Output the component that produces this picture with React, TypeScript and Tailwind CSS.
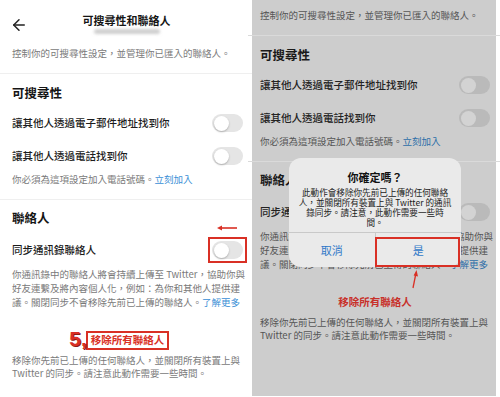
import React from 'react';
import { ArrowLeft } from 'lucide-react';

const FONT = { fontFamily: '"Noto Sans CJK TC", "Noto Sans", sans-serif' };

interface Palette {
  heading: string;
  item: string;
  muted: string;
  link: string;
  divider: string;
  track: string;
  knob: string;
  danger: string;
}

const light: Palette = {
  heading: 'text-[#151515]',
  item: 'text-[#1c1c1c]',
  muted: 'text-[#7a7a7a]',
  link: 'text-[#3a8fd6]',
  divider: 'bg-[#efefef]',
  track: 'bg-[#e5e5e5]',
  knob: 'bg-white shadow-[0_1px_2px_rgba(0,0,0,0.25)]',
  danger: 'text-[#d93025]',
};

const dim: Palette = {
  heading: 'text-[#1a1a1a]',
  item: 'text-[#222222]',
  muted: 'text-[#555555]',
  link: 'text-[#2c6ea8]',
  divider: 'bg-[#dadada]',
  track: 'bg-[#bababa]',
  knob: 'bg-[#d3d3d3]',
  danger: 'text-[#c8302a]',
};

function Toggle({ p }: { p: Palette }) {
  return (
    <div className={`w-[31px] h-[18px] rounded-full p-[1.5px] flex items-center ${p.track}`}>
      <div className={`w-[15px] h-[15px] rounded-full ${p.knob}`} />
    </div>
  );
}

function Divider({ p, top, bottom }: { p: Palette; top: string; bottom: string }) {
  return <div className={`h-px -mx-3 ${p.divider} ${top} ${bottom}`} />;
}

function Body({ p, annotate }: { p: Palette; annotate: boolean }) {
  return (
    <div className="flex flex-col">
      <div className={`h-[22px] flex items-center text-[9.5px] whitespace-nowrap ${p.muted}`}>
        控制你的可搜尋性設定，並管理你已匯入的聯絡人。
      </div>
      <Divider p={p} top="mt-[9px]" bottom="mb-[8px]" />

      <div className={`h-[22px] flex items-center text-[12.5px] font-bold ${p.heading}`}>可搜尋性</div>
      <div className="h-[38px] flex items-center justify-between">
        <span className={`text-[10.5px] font-medium ${p.item}`}>讓其他人透過電子郵件地址找到你</span>
        <Toggle p={p} />
      </div>
      <div className="h-[28px] flex items-center justify-between">
        <span className={`text-[10.5px] font-medium ${p.item}`}>讓其他人透過電話找到你</span>
        <Toggle p={p} />
      </div>
      <div className={`h-[18px] flex items-center text-[9.5px] ${p.muted}`}>
        你必須為這項設定加入電話號碼。<span className={p.link}>立刻加入</span>
      </div>
      <Divider p={p} top="mt-[11px]" bottom="mb-[8px]" />

      <div className={`h-[20px] flex items-center text-[12.5px] font-bold ${p.heading}`}>聯絡人</div>
      <div className="h-[39px] pt-[5px] flex items-center justify-between">
        <span className={`text-[10.5px] font-medium ${p.item}`}>同步通訊錄聯絡人</span>
        {annotate ? (
          <div className="border-2 border-[#d93025] p-[2px] -m-[4px]">
            <Toggle p={p} />
          </div>
        ) : (
          <Toggle p={p} />
        )}
      </div>
      <div className={`text-[9.5px] leading-[14px] whitespace-nowrap ${p.muted}`}>
        <span className="block">你通訊錄中的聯絡人將會持續上傳至 Twitter，協助你與</span>
        <span className="block">好友連繫及將內容個人化，例如：為你和其他人提供建</span>
        <span className="block">
          議。關閉同步不會移除先前已上傳的聯絡人。<span className={p.link}>了解更多</span>
        </span>
      </div>

      <div className="mt-[20px] h-[22px] flex items-center justify-center">
        <div
          className={`relative border-2 px-[3px] h-[19px] flex items-center text-[10.5px] font-bold ${p.danger} ${
            annotate ? 'border-[#d93025]' : 'border-transparent'
          }`}
        >
          移除所有聯絡人
          {annotate && (
            <span
              className="absolute right-full mr-[1px] -top-[5px] text-[21px] font-black text-[#d93025] leading-none [text-shadow:1px_1px_0_#8a1c16]"
              style={{ fontFamily: '"Liberation Sans", sans-serif' }}
            >
              5,
            </span>
          )}
        </div>
      </div>
      <div className={`mt-[3px] text-[9.5px] leading-[12.5px] whitespace-nowrap ${p.muted}`}>
        <span className="block">移除你先前已上傳的任何聯絡人，並關閉所有裝置上與</span>
        <span className="block">Twitter 的同步。請注意此動作需要一些時間。</span>
      </div>
    </div>
  );
}

function ConfirmDialog() {
  return (
    <div className="absolute left-[37px] top-[158px] w-[172px] h-[109px] rounded-[12px] bg-[#eaeaea] flex flex-col">
      <div className="pt-[12px] text-center text-[11px] leading-[14px] font-bold text-[#111]">你確定嗎？</div>
      <div className="mt-[3px] text-center text-[8.6px] leading-[10px] text-[#1a1a1a] whitespace-nowrap">
        <span className="block">此動作會移除你先前已上傳的任何聯絡</span>
        <span className="block">人，並關閉所有裝置上與 Twitter 的通訊</span>
        <span className="block">錄同步。請注意，此動作需要一些時</span>
        <span className="block">間。</span>
      </div>
      <div className="mt-[5px] h-px bg-[#c9c9c9]" />
      <div className="flex-1 flex text-[11px] text-[#2f78c8]">
        <div className="flex-1 flex items-center justify-center border-r border-[#c9c9c9]">取消</div>
        <div className="flex-1 flex items-center justify-center">是</div>
      </div>
      <div className="absolute left-[86px] top-[79px] w-[85px] h-[30px] border-2 border-[#d93025]" />
    </div>
  );
}

export default function App() {
  return (
    <div className="w-[500px] h-[397px] bg-white flex overflow-hidden" style={FONT}>
      {/* left phone */}
      <div className="relative w-[248px] h-[397px] bg-white pl-3 pr-[5px]">
        <div className="h-[42px] flex items-start">
          <div className="w-[18px] mt-[16px] -ml-[2px] text-[#222]">
            <ArrowLeft size={18} strokeWidth={2} />
          </div>
          <div className="flex-1 flex flex-col items-center pt-[13px]">
            <div className="text-[11px] leading-[14px] font-bold text-[#151515]">可搜尋性和聯絡人</div>
            <div className="mt-[2px] w-[66px] h-[5px] rounded-full bg-[#cfcfcf] blur-[1.5px]" />
          </div>
          <div className="w-[18px]" />
        </div>
        <Body p={light} annotate />

        <svg className="absolute left-[216px] top-[224px]" width="22" height="8" viewBox="0 0 22 8">
          <line x1="5" y1="4" x2="21" y2="4" stroke="#d93025" strokeWidth="1.6" />
          <polygon points="1,4 6,1.5 6,6.5" fill="#d93025" />
        </svg>
      </div>

      <div className="w-[4px]" />

      {/* right phone, dimmed with dialog */}
      <div className="relative w-[244px] h-[396px] bg-[#cdcdcd] pl-[8px] pr-[6px] pt-[4px]">
        <Body p={dim} annotate={false} />
        <ConfirmDialog />
        <svg className="absolute left-[156px] top-[269px]" width="12" height="20" viewBox="0 0 12 20">
          <line x1="5" y1="19" x2="7.6" y2="6" stroke="#d93025" strokeWidth="1.3" />
          <polygon points="8.5,1 10,7.5 5.6,6.6" fill="#d93025" />
        </svg>
      </div>
    </div>
  );
}
